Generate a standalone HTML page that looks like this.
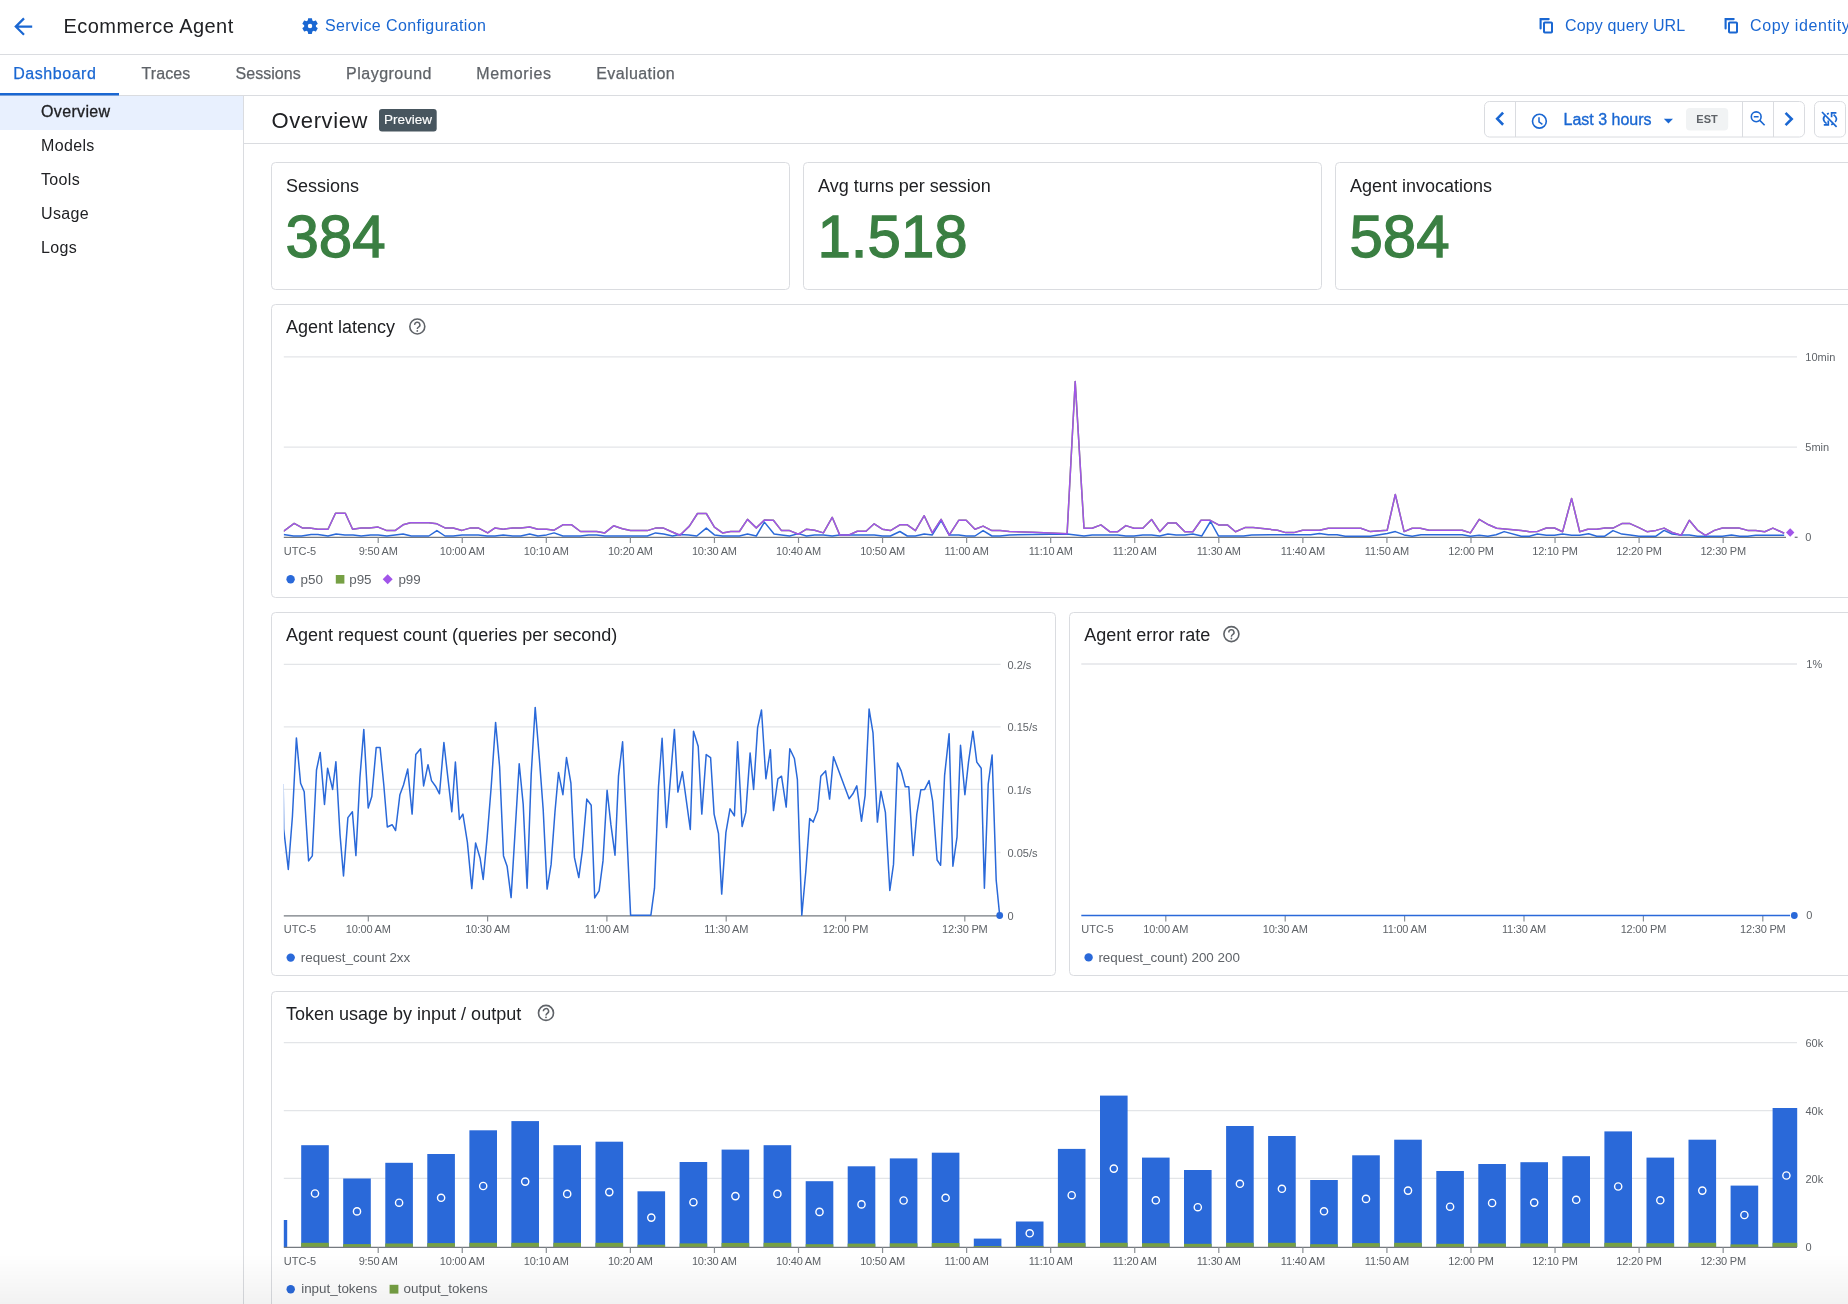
<!DOCTYPE html>
<html><head><meta charset="utf-8"><title>Ecommerce Agent - Overview</title>
<style>
html,body{margin:0;padding:0;background:#fff;}
body{width:1848px;height:1304px;overflow:hidden;position:relative;font-family:"Liberation Sans", sans-serif;}
svg{position:absolute;left:0;top:0;will-change:transform;}
svg text{font-family:"Liberation Sans", sans-serif;}
.fade{position:absolute;left:0;right:0;bottom:0;height:50px;background:linear-gradient(to bottom,rgba(0,0,0,0),rgba(0,0,0,0.05));pointer-events:none;}
</style></head>
<body>
<svg width="1848" height="1304" viewBox="0 0 1848 1304">
<g transform="translate(9.7,13.1) scale(1.125)" fill="#1a67d2"><path d="M7.825 13L13.425 18.6L12 20L4 12L12 4L13.425 5.4L7.825 11H20V13H7.825Z"/></g>
<text x="63.5" y="33" font-size="20" fill="#202124" text-anchor="start" font-weight="400" letter-spacing="0.45">Ecommerce Agent</text>
<g transform="translate(300.2,16.2) scale(0.82)" fill="#1a67d2"><path d="M19.14 12.94c.04-.3.06-.61.06-.94 0-.32-.02-.64-.07-.94l2.03-1.58c.18-.14.23-.41.12-.61l-1.92-3.32c-.12-.22-.37-.29-.59-.22l-2.39.96c-.5-.38-1.03-.7-1.62-.94l-.36-2.54c-.04-.24-.24-.41-.48-.41h-3.840c-.24 0-.43.17-.47.41l-.36 2.54c-.59.24-1.13.57-1.62.94l-2.39-.96c-.22-.08-.47 0-.59.22L2.74 8.87c-.12.21-.08.47.12.61l2.03 1.58c-.05.3-.09.63-.09.94s.02.64.07.94l-2.03 1.58c-.18.14-.23.41-.12.61l1.92 3.32c.12.22.37.29.59.22l2.39-.96c.5.38 1.03.7 1.62.94l.36 2.54c.05.24.24.41.48.41h3.84c.24 0 .44-.17.47-.41l.36-2.54c.59-.24 1.13-.56 1.620-.94l2.39.96c.22.08.47 0 .59-.22l1.92-3.32c.12-.22.07-.47-.12-.61l-2.01-1.58zM12 14.7a2.7 2.7 0 1 1 0-5.4a2.7 2.7 0 1 1 0 5.4z"/></g>
<text x="325" y="31" font-size="16" fill="#1a67d2" text-anchor="start" font-weight="400" letter-spacing="0.4">Service Configuration</text>
<path d="M1540.6,28.4 V19.1 H1548.7" fill="none" stroke="#1a67d2" stroke-width="2.1" stroke-linecap="round"/>
<rect x="1544" y="22.4" width="8" height="10.1" fill="none" stroke="#1a67d2" stroke-width="2" rx="0.8"/>
<text x="1565" y="31" font-size="16" fill="#1a67d2" text-anchor="start" font-weight="400" letter-spacing="0.15">Copy query URL</text>
<path d="M1725.6,28.4 V19.1 H1733.7" fill="none" stroke="#1a67d2" stroke-width="2.1" stroke-linecap="round"/>
<rect x="1729" y="22.4" width="8" height="10.1" fill="none" stroke="#1a67d2" stroke-width="2" rx="0.8"/>
<text x="1750" y="31" font-size="16" fill="#1a67d2" text-anchor="start" font-weight="400" letter-spacing="0.6">Copy identity</text>
<line x1="0" y1="54.5" x2="1848" y2="54.5" stroke="#dadce0" stroke-width="1" />
<text x="13.2" y="79" font-size="16" fill="#1a67d2" text-anchor="start" font-weight="400" stroke="#1a67d2" stroke-width="0.25" letter-spacing="0.55">Dashboard</text>
<text x="141.5" y="79" font-size="16" fill="#5f6368" text-anchor="start" font-weight="400" stroke="#5f6368" stroke-width="0.25" letter-spacing="0.1">Traces</text>
<text x="235.5" y="79" font-size="16" fill="#5f6368" text-anchor="start" font-weight="400" stroke="#5f6368" stroke-width="0.25" letter-spacing="0.05">Sessions</text>
<text x="346" y="79" font-size="16" fill="#5f6368" text-anchor="start" font-weight="400" stroke="#5f6368" stroke-width="0.25" letter-spacing="0.5">Playground</text>
<text x="476.3" y="79" font-size="16" fill="#5f6368" text-anchor="start" font-weight="400" stroke="#5f6368" stroke-width="0.25" letter-spacing="0.65">Memories</text>
<text x="596.3" y="79" font-size="16" fill="#5f6368" text-anchor="start" font-weight="400" stroke="#5f6368" stroke-width="0.25" letter-spacing="0.4">Evaluation</text>
<line x1="0" y1="95.5" x2="1848" y2="95.5" stroke="#dadce0" stroke-width="1" />
<rect x="0" y="93" width="119" height="2.5" fill="#1a67d2" stroke="none" stroke-width="1" rx="0" />
<rect x="0" y="96" width="243" height="34" fill="#e8f0fe" stroke="none" stroke-width="1" rx="0" />
<line x1="243.5" y1="96" x2="243.5" y2="1304" stroke="#dadce0" stroke-width="1" />
<text x="41" y="117" font-size="16" fill="#202124" text-anchor="start" font-weight="400" letter-spacing="0.35" stroke="#202124" stroke-width="0.3">Overview</text>
<text x="41" y="151" font-size="16" fill="#202124" text-anchor="start" font-weight="400" letter-spacing="0.35">Models</text>
<text x="41" y="185" font-size="16" fill="#202124" text-anchor="start" font-weight="400" letter-spacing="0.35">Tools</text>
<text x="41" y="219" font-size="16" fill="#202124" text-anchor="start" font-weight="400" letter-spacing="0.35">Usage</text>
<text x="41" y="253" font-size="16" fill="#202124" text-anchor="start" font-weight="400" letter-spacing="0.35">Logs</text>
<text x="271.5" y="128" font-size="22" fill="#202124" text-anchor="start" font-weight="400" letter-spacing="0.6">Overview</text>
<rect x="379" y="109" width="57.7" height="22.5" fill="#48565f" stroke="none" stroke-width="1" rx="3" />
<text x="384" y="123.8" font-size="13.5" fill="#ffffff" text-anchor="start" font-weight="400" stroke="#ffffff" stroke-width="0.15">Preview</text>
<line x1="244" y1="143.5" x2="1848" y2="143.5" stroke="#dadce0" stroke-width="1" />
<rect x="1484.5" y="101.5" width="320" height="35.5" fill="none" stroke="#dadce0" stroke-width="1" rx="5" />
<line x1="1515.5" y1="101.5" x2="1515.5" y2="137" stroke="#dadce0" stroke-width="1" />
<line x1="1742.5" y1="101.5" x2="1742.5" y2="137" stroke="#dadce0" stroke-width="1" />
<line x1="1773.5" y1="101.5" x2="1773.5" y2="137" stroke="#dadce0" stroke-width="1" />
<path d="M1502.2,113.6 L1497.2,118.7 L1502.2,123.8" fill="none" stroke="#1a67d2" stroke-width="2.6" stroke-linecap="square"/>
<circle cx="1539.4" cy="121.2" r="6.9" fill="none" stroke="#1a67d2" stroke-width="1.6"/>
<path d="M1539,117.3 V121.8 L1542.4,124.3" fill="none" stroke="#1a67d2" stroke-width="1.5"/>
<text x="1563.5" y="124.6" font-size="16" fill="#1a67d2" text-anchor="start" font-weight="400" stroke="#1a67d2" stroke-width="0.35">Last 3 hours</text>
<path d="M1663.8,118.8 L1673,118.8 L1668.4,123.6 Z" fill="#1a67d2"/>
<rect x="1686" y="108" width="42.2" height="22.5" fill="#f1f3f4" stroke="none" stroke-width="1" rx="4" />
<text x="1707" y="122.8" font-size="11" fill="#5f6368" text-anchor="middle" font-weight="700" >EST</text>
<circle cx="1756.2" cy="116.8" r="4.9" fill="none" stroke="#1a67d2" stroke-width="1.6"/>
<path d="M1753.8,116.8 H1758.6 M1759.8,120.4 L1764.6,125.2" fill="none" stroke="#1a67d2" stroke-width="1.6"/>
<path d="M1786.5,113.8 L1791.7,119 L1786.5,124.2" fill="none" stroke="#1a67d2" stroke-width="2.6" stroke-linecap="square"/>
<rect x="1814.5" y="101.5" width="31" height="35.5" fill="none" stroke="#dadce0" stroke-width="1" rx="5" />
<g fill="none" stroke="#1a67d2" stroke-width="1.7" stroke-linecap="butt"><path d="M1822,112 L1836.6,126.8"/><path d="M1824.8,115.4 Q1821.6,120 1826.6,123.6"/><path d="M1823.8,124.9 H1828.3 V120.6"/><path d="M1836.4,112.8 H1831.6 V117.2"/><path d="M1833.6,114.6 Q1838.4,118.4 1835.2,122"/><path d="M1827,114.2 L1828.8,113.2"/><path d="M1831.2,124.8 L1833,123.8"/></g>
<rect x="271.5" y="162.5" width="518" height="127" fill="#fff" stroke="#dadce0" stroke-width="1" rx="4" />
<rect x="803.5" y="162.5" width="518" height="127" fill="#fff" stroke="#dadce0" stroke-width="1" rx="4" />
<rect x="1335.5" y="162.5" width="518" height="127" fill="#fff" stroke="#dadce0" stroke-width="1" rx="4" />
<text x="286" y="191.6" font-size="18" fill="#202124" text-anchor="start" font-weight="400" >Sessions</text>
<text x="818" y="191.6" font-size="18" fill="#202124" text-anchor="start" font-weight="400" >Avg turns per session</text>
<text x="1350" y="191.6" font-size="18" fill="#202124" text-anchor="start" font-weight="400" >Agent invocations</text>
<text x="285.5" y="257.4" font-size="60" fill="#3a7f42" text-anchor="start" font-weight="400" stroke="#3a7f42" stroke-width="1.3">384</text>
<text x="817.5" y="257.4" font-size="60" fill="#3a7f42" text-anchor="start" font-weight="400" stroke="#3a7f42" stroke-width="1.3">1.518</text>
<text x="1349.5" y="257.4" font-size="60" fill="#3a7f42" text-anchor="start" font-weight="400" stroke="#3a7f42" stroke-width="1.3">584</text>
<rect x="271.5" y="304.5" width="1600" height="293" fill="#fff" stroke="#dadce0" stroke-width="1" rx="4" />
<text x="286" y="333.4" font-size="18" fill="#202124" text-anchor="start" font-weight="400" >Agent latency</text>
<circle cx="417.3" cy="326.5" r="7.5" fill="none" stroke="#5f6368" stroke-width="1.6"/>
<path d="M414.7,324.9 A2.6,2.6 0 1 1 418.5,327.1 C417.5,327.7 417.3,328.1 417.3,329.1" fill="none" stroke="#5f6368" stroke-width="1.5"/>
<circle cx="417.3" cy="330.9" r="0.9" fill="#5f6368"/>
<line x1="283.8" y1="356.8" x2="1797" y2="356.8" stroke="#e3e5e8" stroke-width="1.3" />
<line x1="283.8" y1="447.2" x2="1797" y2="447.2" stroke="#e3e5e8" stroke-width="1.3" />
<text x="1805.3" y="361.0" font-size="11" fill="#5f6368" text-anchor="start" font-weight="400" >10min</text>
<text x="1805.3" y="451.4" font-size="11" fill="#5f6368" text-anchor="start" font-weight="400" >5min</text>
<text x="1805.3" y="541.2" font-size="11" fill="#5f6368" text-anchor="start" font-weight="400" >0</text>
<line x1="283.8" y1="537.3" x2="1786" y2="537.3" stroke="#757a80" stroke-width="1.3" />
<line x1="1794.7" y1="537.3" x2="1797.6" y2="537.3" stroke="#757a80" stroke-width="1.3" />
<line x1="378.2" y1="537.3" x2="378.2" y2="543" stroke="#8a8f94" stroke-width="1.2" />
<text x="378.2" y="555" font-size="11" fill="#5f6368" text-anchor="middle" font-weight="400" letter-spacing="-0.2">9:50 AM</text>
<line x1="462.26" y1="537.3" x2="462.26" y2="543" stroke="#8a8f94" stroke-width="1.2" />
<text x="462.3" y="555" font-size="11" fill="#5f6368" text-anchor="middle" font-weight="400" letter-spacing="-0.2">10:00 AM</text>
<line x1="546.3199999999999" y1="537.3" x2="546.3199999999999" y2="543" stroke="#8a8f94" stroke-width="1.2" />
<text x="546.3" y="555" font-size="11" fill="#5f6368" text-anchor="middle" font-weight="400" letter-spacing="-0.2">10:10 AM</text>
<line x1="630.38" y1="537.3" x2="630.38" y2="543" stroke="#8a8f94" stroke-width="1.2" />
<text x="630.4" y="555" font-size="11" fill="#5f6368" text-anchor="middle" font-weight="400" letter-spacing="-0.2">10:20 AM</text>
<line x1="714.44" y1="537.3" x2="714.44" y2="543" stroke="#8a8f94" stroke-width="1.2" />
<text x="714.4" y="555" font-size="11" fill="#5f6368" text-anchor="middle" font-weight="400" letter-spacing="-0.2">10:30 AM</text>
<line x1="798.5" y1="537.3" x2="798.5" y2="543" stroke="#8a8f94" stroke-width="1.2" />
<text x="798.5" y="555" font-size="11" fill="#5f6368" text-anchor="middle" font-weight="400" letter-spacing="-0.2">10:40 AM</text>
<line x1="882.56" y1="537.3" x2="882.56" y2="543" stroke="#8a8f94" stroke-width="1.2" />
<text x="882.6" y="555" font-size="11" fill="#5f6368" text-anchor="middle" font-weight="400" letter-spacing="-0.2">10:50 AM</text>
<line x1="966.6200000000001" y1="537.3" x2="966.6200000000001" y2="543" stroke="#8a8f94" stroke-width="1.2" />
<text x="966.6" y="555" font-size="11" fill="#5f6368" text-anchor="middle" font-weight="400" letter-spacing="-0.2">11:00 AM</text>
<line x1="1050.68" y1="537.3" x2="1050.68" y2="543" stroke="#8a8f94" stroke-width="1.2" />
<text x="1050.7" y="555" font-size="11" fill="#5f6368" text-anchor="middle" font-weight="400" letter-spacing="-0.2">11:10 AM</text>
<line x1="1134.74" y1="537.3" x2="1134.74" y2="543" stroke="#8a8f94" stroke-width="1.2" />
<text x="1134.7" y="555" font-size="11" fill="#5f6368" text-anchor="middle" font-weight="400" letter-spacing="-0.2">11:20 AM</text>
<line x1="1218.8" y1="537.3" x2="1218.8" y2="543" stroke="#8a8f94" stroke-width="1.2" />
<text x="1218.8" y="555" font-size="11" fill="#5f6368" text-anchor="middle" font-weight="400" letter-spacing="-0.2">11:30 AM</text>
<line x1="1302.8600000000001" y1="537.3" x2="1302.8600000000001" y2="543" stroke="#8a8f94" stroke-width="1.2" />
<text x="1302.9" y="555" font-size="11" fill="#5f6368" text-anchor="middle" font-weight="400" letter-spacing="-0.2">11:40 AM</text>
<line x1="1386.92" y1="537.3" x2="1386.92" y2="543" stroke="#8a8f94" stroke-width="1.2" />
<text x="1386.9" y="555" font-size="11" fill="#5f6368" text-anchor="middle" font-weight="400" letter-spacing="-0.2">11:50 AM</text>
<line x1="1470.98" y1="537.3" x2="1470.98" y2="543" stroke="#8a8f94" stroke-width="1.2" />
<text x="1471.0" y="555" font-size="11" fill="#5f6368" text-anchor="middle" font-weight="400" letter-spacing="-0.2">12:00 PM</text>
<line x1="1555.0400000000002" y1="537.3" x2="1555.0400000000002" y2="543" stroke="#8a8f94" stroke-width="1.2" />
<text x="1555.0" y="555" font-size="11" fill="#5f6368" text-anchor="middle" font-weight="400" letter-spacing="-0.2">12:10 PM</text>
<line x1="1639.1000000000001" y1="537.3" x2="1639.1000000000001" y2="543" stroke="#8a8f94" stroke-width="1.2" />
<text x="1639.1" y="555" font-size="11" fill="#5f6368" text-anchor="middle" font-weight="400" letter-spacing="-0.2">12:20 PM</text>
<line x1="1723.16" y1="537.3" x2="1723.16" y2="543" stroke="#8a8f94" stroke-width="1.2" />
<text x="1723.2" y="555" font-size="11" fill="#5f6368" text-anchor="middle" font-weight="400" letter-spacing="-0.2">12:30 PM</text>
<text x="283.8" y="555" font-size="11" fill="#5f6368" text-anchor="start" font-weight="400" >UTC-5</text>
<clipPath id="latclip"><rect x="283.8" y="340" width="1513.2" height="198"/></clipPath>
<g clip-path="url(#latclip)">
<polyline points="283.4,531.5 294.2,523.4 302.3,527.9 309.8,528.1 317.9,529.2 328.0,529.2 335.5,513.3 345.3,513.3 352.6,529.2 361.2,528.1 369.3,528.1 378.1,527.1 386.9,530.6 395.0,530.6 403.1,524.8 410.5,522.7 428.8,522.7 436.9,523.8 445.0,527.9 453.2,528.1 462.0,530.4 470.7,527.9 478.2,527.9 487.7,532.9 495.1,527.9 503.2,529.2 512.7,527.9 520.8,527.9 529.7,527.1 537.9,529.2 546.6,529.2 554.1,530.2 562.9,524.8 571.7,524.8 580.5,531.5 596.7,531.5 604.8,532.9 613.6,525.8 622.4,528.8 630.5,530.6 647.4,530.6 656.2,527.9 663.0,527.9 671.1,531.5 679.9,535.2 689.4,526.1 697.5,513.5 706.3,513.5 714.4,527.1 722.5,532.9 730.6,531.5 739.4,531.5 747.5,519.4 756.3,527.9 764.4,520.0 773.4,520.3 781.5,530.6 789.6,530.6 798.4,534.2 806.5,529.2 814.6,530.2 823.4,532.9 832.2,517.3 839.7,534.9 849.1,534.9 857.3,531.3 866.0,531.3 874.2,523.8 882.3,529.2 890.4,530.6 899.9,524.8 907.3,524.8 915.4,530.6 924.2,515.7 932.3,532.9 941.1,519.4 949.2,535.2 958.7,520.3 966.2,520.3 975.0,529.2 983.1,526.1 991.9,530.6 1000.0,530.6 1009.4,531.5 1032.6,532.3 1067.1,533.7 1075.2,381.5 1084.0,528.3 1092.1,528.3 1100.9,524.9 1109.7,531.7 1117.8,531.7 1125.9,525.6 1134.0,528.3 1142.8,528.3 1151.6,519.5 1159.8,531.7 1167.9,522.9 1176.0,522.9 1184.8,531.7 1192.9,531.7 1201.0,520.2 1209.8,520.2 1218.6,524.9 1227.4,524.9 1235.5,531.7 1245.0,527.6 1253.1,527.6 1277.6,530.2 1285.7,532.6 1293.8,532.6 1302.6,530.2 1319.5,530.2 1328.3,528.2 1360.8,528.2 1370.3,531.6 1387.2,530.2 1395.3,494.4 1404.1,531.6 1412.2,528.2 1420.3,528.2 1429.1,530.2 1462.2,530.2 1470.4,532.9 1479.2,519.4 1488.6,524.8 1496.7,528.2 1521.2,530.4 1529.4,531.7 1537.5,531.4 1546.4,528.0 1554.5,528.0 1562.6,531.7 1571.6,498.4 1579.7,531.7 1587.8,529.3 1596.7,529.3 1604.8,528.1 1613.0,528.1 1621.9,523.6 1630.0,523.6 1638.9,527.6 1647.0,531.7 1656.0,530.4 1664.1,528.1 1672.2,532.5 1681.1,535.3 1689.3,520.3 1697.4,530.1 1705.5,535.3 1714.4,530.4 1722.5,528.0 1738.8,528.0 1747.7,530.4 1755.8,530.4 1764.7,531.7 1772.9,528.1 1784.2,533.3" fill="none" stroke="#76a044" stroke-width="1.5" stroke-linejoin="round" />
<polyline points="283.4,534.6 293.5,536.0 301.6,536.0 311.1,534.6 317.9,534.6 328.0,536.0 336.1,534.0 344.9,534.9 353.1,534.9 361.2,536.0 370.6,534.9 378.1,534.9 386.9,536.0 395.0,534.9 403.1,534.0 411.2,536.0 428.8,536.0 436.9,530.6 445.0,536.0 453.2,536.0 462.0,534.9 478.2,534.9 487.0,536.0 495.1,536.0 503.2,534.9 512.7,536.0 520.8,536.0 529.7,534.0 537.9,536.0 546.6,534.9 554.1,532.9 562.9,536.0 580.5,536.0 588.6,534.9 596.7,534.9 604.8,536.0 647.4,536.0 655.5,532.9 663.7,534.0 672.5,536.0 679.9,534.6 688.7,534.9 696.8,536.0 706.3,528.1 714.4,534.9 722.5,536.0 739.4,536.0 747.5,534.0 756.3,536.0 764.4,522.1 774.1,534.0 781.5,534.9 789.6,536.0 798.4,533.6 806.5,536.0 814.6,534.9 823.4,534.9 832.2,536.0 839.7,534.9 874.2,534.9 882.3,536.0 890.4,536.0 899.9,531.5 907.3,536.0 915.4,536.0 924.2,534.0 932.3,534.9 941.1,520.7 949.2,534.9 958.7,534.9 966.2,536.0 975.0,536.0 983.1,530.6 991.9,536.0 1000.0,536.0 1009.4,534.9 1067.1,534.1 1084.0,536.1 1092.1,535.0 1117.8,535.0 1125.9,536.1 1134.0,536.1 1142.8,535.0 1151.6,535.0 1159.8,536.1 1167.9,534.1 1176.0,535.0 1184.8,535.0 1192.9,534.1 1201.7,536.1 1210.5,521.5 1218.6,536.1 1243.6,536.1 1251.7,535.0 1269.5,534.7 1310.7,534.7 1319.5,533.6 1328.3,534.7 1337.1,534.7 1345.2,536.3 1370.3,536.3 1387.2,533.6 1395.3,531.6 1404.1,534.9 1412.2,536.3 1421.0,534.7 1462.2,534.7 1470.4,536.3 1479.2,535.2 1487.9,536.3 1496.1,534.7 1504.2,531.6 1521.2,536.2 1529.4,536.2 1537.5,534.1 1546.4,535.3 1554.5,535.3 1562.6,534.1 1571.6,535.3 1579.7,535.3 1588.6,533.8 1596.7,536.2 1604.8,536.2 1613.0,530.6 1621.9,534.1 1630.0,534.9 1638.9,536.2 1656.0,536.2 1664.1,530.4 1672.2,534.1 1681.1,534.9 1689.3,534.9 1697.4,536.2 1722.5,536.2 1731.5,534.9 1739.6,536.2 1747.7,536.2 1755.8,535.3 1784.2,535.3" fill="none" stroke="#2a69d9" stroke-width="1.5" stroke-linejoin="round" />
<polyline points="283.4,531.5 294.2,523.4 302.3,527.9 309.8,528.1 317.9,529.2 328.0,529.2 335.5,513.3 345.3,513.3 352.6,529.2 361.2,528.1 369.3,528.1 378.1,527.1 386.9,530.6 395.0,530.6 403.1,524.8 410.5,522.7 428.8,522.7 436.9,523.8 445.0,527.9 453.2,528.1 462.0,530.4 470.7,527.9 478.2,527.9 487.7,532.9 495.1,527.9 503.2,529.2 512.7,527.9 520.8,527.9 529.7,527.1 537.9,529.2 546.6,529.2 554.1,530.2 562.9,524.8 571.7,524.8 580.5,531.5 596.7,531.5 604.8,532.9 613.6,525.8 622.4,528.8 630.5,530.6 647.4,530.6 656.2,527.9 663.0,527.9 671.1,531.5 679.9,535.2 689.4,526.1 697.5,513.5 706.3,513.5 714.4,527.1 722.5,532.9 730.6,531.5 739.4,531.5 747.5,519.4 756.3,527.9 764.4,520.0 773.4,520.3 781.5,530.6 789.6,530.6 798.4,534.2 806.5,529.2 814.6,530.2 823.4,532.9 832.2,517.3 839.7,534.9 849.1,534.9 857.3,531.3 866.0,531.3 874.2,523.8 882.3,529.2 890.4,530.6 899.9,524.8 907.3,524.8 915.4,530.6 924.2,515.7 932.3,532.9 941.1,519.4 949.2,535.2 958.7,520.3 966.2,520.3 975.0,529.2 983.1,526.1 991.9,530.6 1000.0,530.6 1009.4,531.5 1032.6,532.3 1067.1,533.7 1075.2,381.5 1084.0,528.3 1092.1,528.3 1100.9,524.9 1109.7,531.7 1117.8,531.7 1125.9,525.6 1134.0,528.3 1142.8,528.3 1151.6,519.5 1159.8,531.7 1167.9,522.9 1176.0,522.9 1184.8,531.7 1192.9,531.7 1201.0,520.2 1209.8,520.2 1218.6,524.9 1227.4,524.9 1235.5,531.7 1245.0,527.6 1253.1,527.6 1277.6,530.2 1285.7,532.6 1293.8,532.6 1302.6,530.2 1319.5,530.2 1328.3,528.2 1360.8,528.2 1370.3,531.6 1387.2,530.2 1395.3,494.4 1404.1,531.6 1412.2,528.2 1420.3,528.2 1429.1,530.2 1462.2,530.2 1470.4,532.9 1479.2,519.4 1488.6,524.8 1496.7,528.2 1521.2,530.4 1529.4,531.7 1537.5,531.4 1546.4,528.0 1554.5,528.0 1562.6,531.7 1571.6,498.4 1579.7,531.7 1587.8,529.3 1596.7,529.3 1604.8,528.1 1613.0,528.1 1621.9,523.6 1630.0,523.6 1638.9,527.6 1647.0,531.7 1656.0,530.4 1664.1,528.1 1672.2,532.5 1681.1,535.3 1689.3,520.3 1697.4,530.1 1705.5,535.3 1714.4,530.4 1722.5,528.0 1738.8,528.0 1747.7,530.4 1755.8,530.4 1764.7,531.7 1772.9,528.1 1784.2,533.3" fill="none" stroke="#a155e9" stroke-width="1.5" stroke-linejoin="round" />
</g>
<path d="M1790.2,528.2 L1794.4,532.5 L1790.2,536.8 L1786,532.5 Z" fill="#a155e9"/>
<circle cx="290.6" cy="579.2" r="4.2" fill="#2a69d9"/>
<text x="300.5" y="583.5" font-size="13.4" fill="#5f6368" text-anchor="start" font-weight="400" >p50</text>
<rect x="335.8" y="575" width="8.6" height="8.6" fill="#76a044" stroke="none" stroke-width="1" rx="0" />
<text x="349.2" y="583.5" font-size="13.4" fill="#5f6368" text-anchor="start" font-weight="400" >p95</text>
<path d="M387.7,574.2 L392.7,579.2 L387.7,584.2 L382.7,579.2 Z" fill="#a155e9"/>
<text x="398.4" y="583.5" font-size="13.4" fill="#5f6368" text-anchor="start" font-weight="400" >p99</text>
<rect x="271.5" y="612.5" width="784" height="363" fill="#fff" stroke="#dadce0" stroke-width="1" rx="4" />
<text x="286" y="640.8" font-size="18" fill="#202124" text-anchor="start" font-weight="400" >Agent request count (queries per second)</text>
<line x1="283.8" y1="664.4" x2="1000.6" y2="664.4" stroke="#e3e5e8" stroke-width="1.3" />
<line x1="283.8" y1="726.9" x2="1000.6" y2="726.9" stroke="#e3e5e8" stroke-width="1.3" />
<line x1="283.8" y1="789.4" x2="1000.6" y2="789.4" stroke="#e3e5e8" stroke-width="1.3" />
<line x1="283.8" y1="852.5" x2="1000.6" y2="852.5" stroke="#e3e5e8" stroke-width="1.3" />
<text x="1007.5" y="668.6" font-size="11" fill="#5f6368" text-anchor="start" font-weight="400" >0.2/s</text>
<text x="1007.5" y="731.1" font-size="11" fill="#5f6368" text-anchor="start" font-weight="400" >0.15/s</text>
<text x="1007.5" y="793.6" font-size="11" fill="#5f6368" text-anchor="start" font-weight="400" >0.1/s</text>
<text x="1007.5" y="856.7" font-size="11" fill="#5f6368" text-anchor="start" font-weight="400" >0.05/s</text>
<text x="1007.5" y="919.7" font-size="11" fill="#5f6368" text-anchor="start" font-weight="400" >0</text>
<line x1="283.8" y1="915.8" x2="1000.6" y2="915.8" stroke="#757a80" stroke-width="1.3" />
<line x1="368.3" y1="915.8" x2="368.3" y2="921.5" stroke="#8a8f94" stroke-width="1.2" />
<text x="368.3" y="933" font-size="11" fill="#5f6368" text-anchor="middle" font-weight="400" letter-spacing="-0.2">10:00 AM</text>
<line x1="487.6" y1="915.8" x2="487.6" y2="921.5" stroke="#8a8f94" stroke-width="1.2" />
<text x="487.6" y="933" font-size="11" fill="#5f6368" text-anchor="middle" font-weight="400" letter-spacing="-0.2">10:30 AM</text>
<line x1="606.9" y1="915.8" x2="606.9" y2="921.5" stroke="#8a8f94" stroke-width="1.2" />
<text x="606.9" y="933" font-size="11" fill="#5f6368" text-anchor="middle" font-weight="400" letter-spacing="-0.2">11:00 AM</text>
<line x1="726.2" y1="915.8" x2="726.2" y2="921.5" stroke="#8a8f94" stroke-width="1.2" />
<text x="726.2" y="933" font-size="11" fill="#5f6368" text-anchor="middle" font-weight="400" letter-spacing="-0.2">11:30 AM</text>
<line x1="845.5" y1="915.8" x2="845.5" y2="921.5" stroke="#8a8f94" stroke-width="1.2" />
<text x="845.5" y="933" font-size="11" fill="#5f6368" text-anchor="middle" font-weight="400" letter-spacing="-0.2">12:00 PM</text>
<line x1="964.8" y1="915.8" x2="964.8" y2="921.5" stroke="#8a8f94" stroke-width="1.2" />
<text x="964.8" y="933" font-size="11" fill="#5f6368" text-anchor="middle" font-weight="400" letter-spacing="-0.2">12:30 PM</text>
<text x="283.8" y="933" font-size="11" fill="#5f6368" text-anchor="start" font-weight="400" >UTC-5</text>
<clipPath id="reqclip"><rect x="283.8" y="640" width="718.8" height="277"/></clipPath>
<g clip-path="url(#reqclip)">
<polyline points="283.2,784.1 283.7,829.0 288.3,869.4 292.4,816.8 296.4,737.9 300.6,783.2 304.2,791.7 308.6,860.9 312.3,855.9 316.5,770.0 320.2,752.4 324.5,804.4 327.6,768.2 332.6,789.4 335.9,761.7 340.0,834.4 343.5,875.9 347.9,817.6 352.4,811.8 355.9,855.6 359.9,777.9 363.8,729.4 368.2,807.9 371.8,796.5 376.2,747.6 380.1,747.6 383.8,785.0 387.3,827.0 392.1,824.7 395.6,830.5 399.9,794.7 403.5,785.0 407.7,769.1 412.1,814.1 415.8,754.6 420.6,748.8 423.6,785.9 428.0,764.7 431.5,780.6 435.9,786.8 439.5,793.8 443.9,742.6 447.9,777.9 451.8,811.8 455.4,762.1 459.4,819.4 462.9,814.1 467.4,842.4 471.8,888.6 475.6,842.9 480.1,858.2 483.2,879.4 487.1,837.9 491.2,786.8 495.6,722.4 499.6,766.5 503.5,855.9 507.1,866.2 511.1,897.6 519.2,763.8 523.2,804.4 527.1,888.2 531.2,774.4 535.2,707.4 539.5,760.3 543.2,809.7 547.1,889.1 551.1,864.4 555.0,811.5 558.5,772.6 562.9,794.7 566.5,757.6 570.9,783.2 574.4,857.4 578.8,877.6 582.4,850.3 586.8,799.1 591.2,805.3 594.7,897.9 599.1,890.9 603.0,860.9 607.1,790.3 610.9,824.7 615.0,855.2 618.5,776.2 622.6,741.8 630.6,915.2 650.9,915.2 654.5,888.2 658.5,786.8 662.1,738.2 666.5,827.4 674.4,729.4 677.9,792.1 682.4,771.8 690.3,829.5 693.5,731.2 698.2,746.2 701.8,814.1 706.2,754.6 710.6,757.6 714.1,814.1 718.5,833.5 721.7,894.1 725.9,832.6 730.0,808.8 734.4,815.9 737.6,741.8 742.1,826.5 745.8,812.4 750.1,752.9 753.6,789.4 757.6,727.6 761.5,710.0 765.9,778.8 770.4,749.7 773.5,810.6 777.9,778.8 781.5,776.2 786.2,807.1 789.8,748.8 794.4,758.5 797.4,779.7 801.8,915.2 805.8,871.5 809.7,818.5 813.2,822.1 817.6,810.6 820.8,776.2 825.6,770.9 829.6,799.1 833.5,756.8 849.1,798.8 852.9,793.8 856.8,785.9 861.5,821.2 865.1,795.6 869.1,709.1 873.0,732.9 877.4,822.1 880.9,791.2 885.4,812.4 889.8,890.5 893.5,864.4 897.4,762.9 901.2,770.9 905.3,786.8 908.8,786.8 913.2,855.6 916.8,814.1 920.8,789.8 924.7,789.4 929.1,780.6 932.6,800.9 937.1,860.0 940.6,865.3 944.6,775.3 949.1,733.8 952.9,866.2 957.0,837.1 960.5,745.3 964.9,794.7 968.5,762.1 972.9,731.2 976.8,762.1 981.2,768.2 984.4,888.2 988.2,784.1 992.1,755.0 996.2,880.3 999.7,915.6" fill="none" stroke="#2a69d9" stroke-width="1.5" stroke-linejoin="round" />
</g>
<circle cx="999.7" cy="915.5" r="3.4" fill="#2a69d9"/>
<circle cx="290.7" cy="957.6" r="4.2" fill="#2a69d9"/>
<text x="300.8" y="962" font-size="13.4" fill="#5f6368" text-anchor="start" font-weight="400" >request_count 2xx</text>
<rect x="1069.5" y="612.5" width="800" height="363" fill="#fff" stroke="#dadce0" stroke-width="1" rx="4" />
<text x="1084.3" y="640.8" font-size="18" fill="#202124" text-anchor="start" font-weight="400" >Agent error rate</text>
<circle cx="1231.4" cy="634.1" r="7.5" fill="none" stroke="#5f6368" stroke-width="1.6"/>
<path d="M1228.8000000000002,632.5 A2.6,2.6 0 1 1 1232.6000000000001,634.7 C1231.6000000000001,635.3000000000001 1231.4,635.7 1231.4,636.7" fill="none" stroke="#5f6368" stroke-width="1.5"/>
<circle cx="1231.4" cy="638.5" r="0.9" fill="#5f6368"/>
<line x1="1081.3" y1="664" x2="1797" y2="664" stroke="#e3e5e8" stroke-width="1.3" />
<text x="1806.3" y="668.2" font-size="11" fill="#5f6368" text-anchor="start" font-weight="400" >1%</text>
<text x="1806.3" y="918.9" font-size="11" fill="#5f6368" text-anchor="start" font-weight="400" >0</text>
<line x1="1165.8" y1="915.8" x2="1165.8" y2="921.5" stroke="#8a8f94" stroke-width="1.2" />
<text x="1165.8" y="933" font-size="11" fill="#5f6368" text-anchor="middle" font-weight="400" letter-spacing="-0.2">10:00 AM</text>
<line x1="1285.2" y1="915.8" x2="1285.2" y2="921.5" stroke="#8a8f94" stroke-width="1.2" />
<text x="1285.2" y="933" font-size="11" fill="#5f6368" text-anchor="middle" font-weight="400" letter-spacing="-0.2">10:30 AM</text>
<line x1="1404.6" y1="915.8" x2="1404.6" y2="921.5" stroke="#8a8f94" stroke-width="1.2" />
<text x="1404.6" y="933" font-size="11" fill="#5f6368" text-anchor="middle" font-weight="400" letter-spacing="-0.2">11:00 AM</text>
<line x1="1524.0" y1="915.8" x2="1524.0" y2="921.5" stroke="#8a8f94" stroke-width="1.2" />
<text x="1524.0" y="933" font-size="11" fill="#5f6368" text-anchor="middle" font-weight="400" letter-spacing="-0.2">11:30 AM</text>
<line x1="1643.4" y1="915.8" x2="1643.4" y2="921.5" stroke="#8a8f94" stroke-width="1.2" />
<text x="1643.4" y="933" font-size="11" fill="#5f6368" text-anchor="middle" font-weight="400" letter-spacing="-0.2">12:00 PM</text>
<line x1="1762.8" y1="915.8" x2="1762.8" y2="921.5" stroke="#8a8f94" stroke-width="1.2" />
<text x="1762.8" y="933" font-size="11" fill="#5f6368" text-anchor="middle" font-weight="400" letter-spacing="-0.2">12:30 PM</text>
<text x="1081.3" y="933" font-size="11" fill="#5f6368" text-anchor="start" font-weight="400" >UTC-5</text>
<line x1="1081.3" y1="915.5" x2="1790" y2="915.5" stroke="#2a69d9" stroke-width="1.6" />
<circle cx="1794.3" cy="915.5" r="3.4" fill="#2a69d9"/>
<circle cx="1088.6" cy="957.4" r="4.2" fill="#2a69d9"/>
<text x="1098.4" y="962" font-size="13.4" fill="#5f6368" text-anchor="start" font-weight="400" >request_count) 200 200</text>
<rect x="271.5" y="991.5" width="1600" height="400" fill="#fff" stroke="#dadce0" stroke-width="1" rx="4" />
<text x="286" y="1019.5" font-size="18" fill="#202124" text-anchor="start" font-weight="400" >Token usage by input / output</text>
<circle cx="546" cy="1012.9" r="7.5" fill="none" stroke="#5f6368" stroke-width="1.6"/>
<path d="M543.4,1011.3 A2.6,2.6 0 1 1 547.2,1013.5 C546.2,1014.1 546,1014.5 546,1015.5" fill="none" stroke="#5f6368" stroke-width="1.5"/>
<circle cx="546" cy="1017.3" r="0.9" fill="#5f6368"/>
<line x1="283.8" y1="1042.7" x2="1797" y2="1042.7" stroke="#e3e5e8" stroke-width="1.3" />
<line x1="283.8" y1="1110.6" x2="1797" y2="1110.6" stroke="#e3e5e8" stroke-width="1.3" />
<line x1="283.8" y1="1178.3" x2="1797" y2="1178.3" stroke="#e3e5e8" stroke-width="1.3" />
<text x="1805.4" y="1046.9" font-size="11" fill="#5f6368" text-anchor="start" font-weight="400" >60k</text>
<text x="1805.4" y="1114.8" font-size="11" fill="#5f6368" text-anchor="start" font-weight="400" >40k</text>
<text x="1805.4" y="1182.5" font-size="11" fill="#5f6368" text-anchor="start" font-weight="400" >20k</text>
<text x="1805.4" y="1251.2" font-size="11" fill="#5f6368" text-anchor="start" font-weight="400" >0</text>
<rect x="283.8" y="1220" width="3.4" height="27" fill="#2a69d9" stroke="none" stroke-width="1" rx="0" />
<rect x="301.2" y="1145.2" width="27.6" height="101.8" fill="#2a69d9" stroke="none" stroke-width="1" rx="0" />
<rect x="301.2" y="1242.8" width="27.6" height="4.2" fill="#76a044" stroke="none" stroke-width="1" rx="0" />
<circle cx="315.0" cy="1193.5" r="3.6" fill="none" stroke="#ffffff" stroke-width="1.4"/>
<rect x="343.2" y="1178.5" width="27.6" height="68.5" fill="#2a69d9" stroke="none" stroke-width="1" rx="0" />
<rect x="343.2" y="1244.1" width="27.6" height="2.9" fill="#76a044" stroke="none" stroke-width="1" rx="0" />
<circle cx="357.0" cy="1211.4" r="3.6" fill="none" stroke="#ffffff" stroke-width="1.4"/>
<rect x="385.3" y="1162.8" width="27.6" height="84.2" fill="#2a69d9" stroke="none" stroke-width="1" rx="0" />
<rect x="385.3" y="1243.5" width="27.6" height="3.5" fill="#76a044" stroke="none" stroke-width="1" rx="0" />
<circle cx="399.1" cy="1202.7" r="3.6" fill="none" stroke="#ffffff" stroke-width="1.4"/>
<rect x="427.3" y="1154" width="27.6" height="93" fill="#2a69d9" stroke="none" stroke-width="1" rx="0" />
<rect x="427.3" y="1243.1" width="27.6" height="3.9" fill="#76a044" stroke="none" stroke-width="1" rx="0" />
<circle cx="441.1" cy="1197.8" r="3.6" fill="none" stroke="#ffffff" stroke-width="1.4"/>
<rect x="469.4" y="1130.3" width="27.6" height="116.7" fill="#2a69d9" stroke="none" stroke-width="1" rx="0" />
<rect x="469.4" y="1242.8" width="27.6" height="4.2" fill="#76a044" stroke="none" stroke-width="1" rx="0" />
<circle cx="483.2" cy="1186" r="3.6" fill="none" stroke="#ffffff" stroke-width="1.4"/>
<rect x="511.4" y="1121.1" width="27.6" height="125.9" fill="#2a69d9" stroke="none" stroke-width="1" rx="0" />
<rect x="511.4" y="1242.8" width="27.6" height="4.2" fill="#76a044" stroke="none" stroke-width="1" rx="0" />
<circle cx="525.2" cy="1181.6" r="3.6" fill="none" stroke="#ffffff" stroke-width="1.4"/>
<rect x="553.4" y="1145.2" width="27.6" height="101.8" fill="#2a69d9" stroke="none" stroke-width="1" rx="0" />
<rect x="553.4" y="1242.8" width="27.6" height="4.2" fill="#76a044" stroke="none" stroke-width="1" rx="0" />
<circle cx="567.2" cy="1193.9" r="3.6" fill="none" stroke="#ffffff" stroke-width="1.4"/>
<rect x="595.5" y="1141.7" width="27.6" height="105.3" fill="#2a69d9" stroke="none" stroke-width="1" rx="0" />
<rect x="595.5" y="1242.8" width="27.6" height="4.2" fill="#76a044" stroke="none" stroke-width="1" rx="0" />
<circle cx="609.3" cy="1192.1" r="3.6" fill="none" stroke="#ffffff" stroke-width="1.4"/>
<rect x="637.5" y="1191.3" width="27.6" height="55.7" fill="#2a69d9" stroke="none" stroke-width="1" rx="0" />
<rect x="637.5" y="1244.7" width="27.6" height="2.3" fill="#76a044" stroke="none" stroke-width="1" rx="0" />
<circle cx="651.3" cy="1217.6" r="3.6" fill="none" stroke="#ffffff" stroke-width="1.4"/>
<rect x="679.6" y="1162" width="27.6" height="85" fill="#2a69d9" stroke="none" stroke-width="1" rx="0" />
<rect x="679.6" y="1243.4" width="27.6" height="3.6" fill="#76a044" stroke="none" stroke-width="1" rx="0" />
<circle cx="693.4" cy="1202.2" r="3.6" fill="none" stroke="#ffffff" stroke-width="1.4"/>
<rect x="721.6" y="1149.6" width="27.6" height="97.4" fill="#2a69d9" stroke="none" stroke-width="1" rx="0" />
<rect x="721.6" y="1242.9" width="27.6" height="4.1" fill="#76a044" stroke="none" stroke-width="1" rx="0" />
<circle cx="735.4" cy="1196.1" r="3.6" fill="none" stroke="#ffffff" stroke-width="1.4"/>
<rect x="763.6" y="1145.2" width="27.6" height="101.8" fill="#2a69d9" stroke="none" stroke-width="1" rx="0" />
<rect x="763.6" y="1242.8" width="27.6" height="4.2" fill="#76a044" stroke="none" stroke-width="1" rx="0" />
<circle cx="777.4" cy="1193.9" r="3.6" fill="none" stroke="#ffffff" stroke-width="1.4"/>
<rect x="805.7" y="1181.2" width="27.6" height="65.8" fill="#2a69d9" stroke="none" stroke-width="1" rx="0" />
<rect x="805.7" y="1244.2" width="27.6" height="2.8" fill="#76a044" stroke="none" stroke-width="1" rx="0" />
<circle cx="819.5" cy="1211.9" r="3.6" fill="none" stroke="#ffffff" stroke-width="1.4"/>
<rect x="847.7" y="1166.3" width="27.6" height="80.7" fill="#2a69d9" stroke="none" stroke-width="1" rx="0" />
<rect x="847.7" y="1243.6" width="27.6" height="3.4" fill="#76a044" stroke="none" stroke-width="1" rx="0" />
<circle cx="861.5" cy="1204.4" r="3.6" fill="none" stroke="#ffffff" stroke-width="1.4"/>
<rect x="889.8" y="1158.4" width="27.6" height="88.6" fill="#2a69d9" stroke="none" stroke-width="1" rx="0" />
<rect x="889.8" y="1243.3" width="27.6" height="3.7" fill="#76a044" stroke="none" stroke-width="1" rx="0" />
<circle cx="903.6" cy="1200.5" r="3.6" fill="none" stroke="#ffffff" stroke-width="1.4"/>
<rect x="931.8" y="1152.7" width="27.6" height="94.3" fill="#2a69d9" stroke="none" stroke-width="1" rx="0" />
<rect x="931.8" y="1243.0" width="27.6" height="4.0" fill="#76a044" stroke="none" stroke-width="1" rx="0" />
<circle cx="945.6" cy="1197.8" r="3.6" fill="none" stroke="#ffffff" stroke-width="1.4"/>
<rect x="973.8" y="1238.6" width="27.6" height="8.4" fill="#2a69d9" stroke="none" stroke-width="1" rx="0" />
<rect x="973.8" y="1246.0" width="27.6" height="1.0" fill="#76a044" stroke="none" stroke-width="1" rx="0" />
<rect x="1015.9" y="1221.5" width="27.6" height="25.5" fill="#2a69d9" stroke="none" stroke-width="1" rx="0" />
<rect x="1015.9" y="1245.9" width="27.6" height="1.1" fill="#76a044" stroke="none" stroke-width="1" rx="0" />
<circle cx="1029.7" cy="1233.3" r="3.6" fill="none" stroke="#ffffff" stroke-width="1.4"/>
<rect x="1057.9" y="1148.9" width="27.6" height="98.1" fill="#2a69d9" stroke="none" stroke-width="1" rx="0" />
<rect x="1057.9" y="1242.9" width="27.6" height="4.1" fill="#76a044" stroke="none" stroke-width="1" rx="0" />
<circle cx="1071.7" cy="1195.2" r="3.6" fill="none" stroke="#ffffff" stroke-width="1.4"/>
<rect x="1100.0" y="1095.6" width="27.6" height="151.4" fill="#2a69d9" stroke="none" stroke-width="1" rx="0" />
<rect x="1100.0" y="1242.8" width="27.6" height="4.2" fill="#76a044" stroke="none" stroke-width="1" rx="0" />
<circle cx="1113.8" cy="1168.6" r="3.6" fill="none" stroke="#ffffff" stroke-width="1.4"/>
<rect x="1142.0" y="1157.6" width="27.6" height="89.4" fill="#2a69d9" stroke="none" stroke-width="1" rx="0" />
<rect x="1142.0" y="1243.2" width="27.6" height="3.8" fill="#76a044" stroke="none" stroke-width="1" rx="0" />
<circle cx="1155.8" cy="1200.3" r="3.6" fill="none" stroke="#ffffff" stroke-width="1.4"/>
<rect x="1184.0" y="1170" width="27.6" height="77" fill="#2a69d9" stroke="none" stroke-width="1" rx="0" />
<rect x="1184.0" y="1243.8" width="27.6" height="3.2" fill="#76a044" stroke="none" stroke-width="1" rx="0" />
<circle cx="1197.8" cy="1207.2" r="3.6" fill="none" stroke="#ffffff" stroke-width="1.4"/>
<rect x="1226.1" y="1126" width="27.6" height="121" fill="#2a69d9" stroke="none" stroke-width="1" rx="0" />
<rect x="1226.1" y="1242.8" width="27.6" height="4.2" fill="#76a044" stroke="none" stroke-width="1" rx="0" />
<circle cx="1239.9" cy="1183.8" r="3.6" fill="none" stroke="#ffffff" stroke-width="1.4"/>
<rect x="1268.1" y="1136" width="27.6" height="111" fill="#2a69d9" stroke="none" stroke-width="1" rx="0" />
<rect x="1268.1" y="1242.8" width="27.6" height="4.2" fill="#76a044" stroke="none" stroke-width="1" rx="0" />
<circle cx="1281.9" cy="1188.8" r="3.6" fill="none" stroke="#ffffff" stroke-width="1.4"/>
<rect x="1310.2" y="1180" width="27.6" height="67" fill="#2a69d9" stroke="none" stroke-width="1" rx="0" />
<rect x="1310.2" y="1244.2" width="27.6" height="2.8" fill="#76a044" stroke="none" stroke-width="1" rx="0" />
<circle cx="1324.0" cy="1211.3" r="3.6" fill="none" stroke="#ffffff" stroke-width="1.4"/>
<rect x="1352.2" y="1155.3" width="27.6" height="91.7" fill="#2a69d9" stroke="none" stroke-width="1" rx="0" />
<rect x="1352.2" y="1243.1" width="27.6" height="3.9" fill="#76a044" stroke="none" stroke-width="1" rx="0" />
<circle cx="1366.0" cy="1198.9" r="3.6" fill="none" stroke="#ffffff" stroke-width="1.4"/>
<rect x="1394.2" y="1139.7" width="27.6" height="107.3" fill="#2a69d9" stroke="none" stroke-width="1" rx="0" />
<rect x="1394.2" y="1242.8" width="27.6" height="4.2" fill="#76a044" stroke="none" stroke-width="1" rx="0" />
<circle cx="1408.0" cy="1190.6" r="3.6" fill="none" stroke="#ffffff" stroke-width="1.4"/>
<rect x="1436.3" y="1171" width="27.6" height="76" fill="#2a69d9" stroke="none" stroke-width="1" rx="0" />
<rect x="1436.3" y="1243.8" width="27.6" height="3.2" fill="#76a044" stroke="none" stroke-width="1" rx="0" />
<circle cx="1450.1" cy="1206.7" r="3.6" fill="none" stroke="#ffffff" stroke-width="1.4"/>
<rect x="1478.3" y="1164" width="27.6" height="83" fill="#2a69d9" stroke="none" stroke-width="1" rx="0" />
<rect x="1478.3" y="1243.5" width="27.6" height="3.5" fill="#76a044" stroke="none" stroke-width="1" rx="0" />
<circle cx="1492.1" cy="1203" r="3.6" fill="none" stroke="#ffffff" stroke-width="1.4"/>
<rect x="1520.4" y="1162.2" width="27.6" height="84.8" fill="#2a69d9" stroke="none" stroke-width="1" rx="0" />
<rect x="1520.4" y="1243.4" width="27.6" height="3.6" fill="#76a044" stroke="none" stroke-width="1" rx="0" />
<circle cx="1534.2" cy="1202.6" r="3.6" fill="none" stroke="#ffffff" stroke-width="1.4"/>
<rect x="1562.4" y="1156.2" width="27.6" height="90.8" fill="#2a69d9" stroke="none" stroke-width="1" rx="0" />
<rect x="1562.4" y="1243.2" width="27.6" height="3.8" fill="#76a044" stroke="none" stroke-width="1" rx="0" />
<circle cx="1576.2" cy="1199.8" r="3.6" fill="none" stroke="#ffffff" stroke-width="1.4"/>
<rect x="1604.4" y="1131.4" width="27.6" height="115.6" fill="#2a69d9" stroke="none" stroke-width="1" rx="0" />
<rect x="1604.4" y="1242.8" width="27.6" height="4.2" fill="#76a044" stroke="none" stroke-width="1" rx="0" />
<circle cx="1618.2" cy="1186.5" r="3.6" fill="none" stroke="#ffffff" stroke-width="1.4"/>
<rect x="1646.5" y="1157.6" width="27.6" height="89.4" fill="#2a69d9" stroke="none" stroke-width="1" rx="0" />
<rect x="1646.5" y="1243.2" width="27.6" height="3.8" fill="#76a044" stroke="none" stroke-width="1" rx="0" />
<circle cx="1660.3" cy="1200.3" r="3.6" fill="none" stroke="#ffffff" stroke-width="1.4"/>
<rect x="1688.5" y="1139.7" width="27.6" height="107.3" fill="#2a69d9" stroke="none" stroke-width="1" rx="0" />
<rect x="1688.5" y="1242.8" width="27.6" height="4.2" fill="#76a044" stroke="none" stroke-width="1" rx="0" />
<circle cx="1702.3" cy="1190.6" r="3.6" fill="none" stroke="#ffffff" stroke-width="1.4"/>
<rect x="1730.6" y="1185.6" width="27.6" height="61.4" fill="#2a69d9" stroke="none" stroke-width="1" rx="0" />
<rect x="1730.6" y="1244.4" width="27.6" height="2.6" fill="#76a044" stroke="none" stroke-width="1" rx="0" />
<circle cx="1744.4" cy="1215" r="3.6" fill="none" stroke="#ffffff" stroke-width="1.4"/>
<rect x="1772.6" y="1108" width="24.6" height="139" fill="#2a69d9" stroke="none" stroke-width="1" rx="0" />
<rect x="1772.6" y="1242.8" width="24.6" height="4.2" fill="#76a044" stroke="none" stroke-width="1" rx="0" />
<circle cx="1786.4" cy="1175.5" r="3.6" fill="none" stroke="#ffffff" stroke-width="1.4"/>
<line x1="283.8" y1="1247.3" x2="1797" y2="1247.3" stroke="#757a80" stroke-width="1.3" />
<line x1="378.2" y1="1247.3" x2="378.2" y2="1253" stroke="#8a8f94" stroke-width="1.2" />
<text x="378.2" y="1265" font-size="11" fill="#5f6368" text-anchor="middle" font-weight="400" letter-spacing="-0.2">9:50 AM</text>
<line x1="462.26" y1="1247.3" x2="462.26" y2="1253" stroke="#8a8f94" stroke-width="1.2" />
<text x="462.3" y="1265" font-size="11" fill="#5f6368" text-anchor="middle" font-weight="400" letter-spacing="-0.2">10:00 AM</text>
<line x1="546.3199999999999" y1="1247.3" x2="546.3199999999999" y2="1253" stroke="#8a8f94" stroke-width="1.2" />
<text x="546.3" y="1265" font-size="11" fill="#5f6368" text-anchor="middle" font-weight="400" letter-spacing="-0.2">10:10 AM</text>
<line x1="630.38" y1="1247.3" x2="630.38" y2="1253" stroke="#8a8f94" stroke-width="1.2" />
<text x="630.4" y="1265" font-size="11" fill="#5f6368" text-anchor="middle" font-weight="400" letter-spacing="-0.2">10:20 AM</text>
<line x1="714.44" y1="1247.3" x2="714.44" y2="1253" stroke="#8a8f94" stroke-width="1.2" />
<text x="714.4" y="1265" font-size="11" fill="#5f6368" text-anchor="middle" font-weight="400" letter-spacing="-0.2">10:30 AM</text>
<line x1="798.5" y1="1247.3" x2="798.5" y2="1253" stroke="#8a8f94" stroke-width="1.2" />
<text x="798.5" y="1265" font-size="11" fill="#5f6368" text-anchor="middle" font-weight="400" letter-spacing="-0.2">10:40 AM</text>
<line x1="882.56" y1="1247.3" x2="882.56" y2="1253" stroke="#8a8f94" stroke-width="1.2" />
<text x="882.6" y="1265" font-size="11" fill="#5f6368" text-anchor="middle" font-weight="400" letter-spacing="-0.2">10:50 AM</text>
<line x1="966.6200000000001" y1="1247.3" x2="966.6200000000001" y2="1253" stroke="#8a8f94" stroke-width="1.2" />
<text x="966.6" y="1265" font-size="11" fill="#5f6368" text-anchor="middle" font-weight="400" letter-spacing="-0.2">11:00 AM</text>
<line x1="1050.68" y1="1247.3" x2="1050.68" y2="1253" stroke="#8a8f94" stroke-width="1.2" />
<text x="1050.7" y="1265" font-size="11" fill="#5f6368" text-anchor="middle" font-weight="400" letter-spacing="-0.2">11:10 AM</text>
<line x1="1134.74" y1="1247.3" x2="1134.74" y2="1253" stroke="#8a8f94" stroke-width="1.2" />
<text x="1134.7" y="1265" font-size="11" fill="#5f6368" text-anchor="middle" font-weight="400" letter-spacing="-0.2">11:20 AM</text>
<line x1="1218.8" y1="1247.3" x2="1218.8" y2="1253" stroke="#8a8f94" stroke-width="1.2" />
<text x="1218.8" y="1265" font-size="11" fill="#5f6368" text-anchor="middle" font-weight="400" letter-spacing="-0.2">11:30 AM</text>
<line x1="1302.8600000000001" y1="1247.3" x2="1302.8600000000001" y2="1253" stroke="#8a8f94" stroke-width="1.2" />
<text x="1302.9" y="1265" font-size="11" fill="#5f6368" text-anchor="middle" font-weight="400" letter-spacing="-0.2">11:40 AM</text>
<line x1="1386.92" y1="1247.3" x2="1386.92" y2="1253" stroke="#8a8f94" stroke-width="1.2" />
<text x="1386.9" y="1265" font-size="11" fill="#5f6368" text-anchor="middle" font-weight="400" letter-spacing="-0.2">11:50 AM</text>
<line x1="1470.98" y1="1247.3" x2="1470.98" y2="1253" stroke="#8a8f94" stroke-width="1.2" />
<text x="1471.0" y="1265" font-size="11" fill="#5f6368" text-anchor="middle" font-weight="400" letter-spacing="-0.2">12:00 PM</text>
<line x1="1555.0400000000002" y1="1247.3" x2="1555.0400000000002" y2="1253" stroke="#8a8f94" stroke-width="1.2" />
<text x="1555.0" y="1265" font-size="11" fill="#5f6368" text-anchor="middle" font-weight="400" letter-spacing="-0.2">12:10 PM</text>
<line x1="1639.1000000000001" y1="1247.3" x2="1639.1000000000001" y2="1253" stroke="#8a8f94" stroke-width="1.2" />
<text x="1639.1" y="1265" font-size="11" fill="#5f6368" text-anchor="middle" font-weight="400" letter-spacing="-0.2">12:20 PM</text>
<line x1="1723.16" y1="1247.3" x2="1723.16" y2="1253" stroke="#8a8f94" stroke-width="1.2" />
<text x="1723.2" y="1265" font-size="11" fill="#5f6368" text-anchor="middle" font-weight="400" letter-spacing="-0.2">12:30 PM</text>
<text x="283.8" y="1265" font-size="11" fill="#5f6368" text-anchor="start" font-weight="400" >UTC-5</text>
<circle cx="290.7" cy="1289.2" r="4.2" fill="#2a69d9"/>
<text x="301.2" y="1293" font-size="13.4" fill="#5f6368" text-anchor="start" font-weight="400" >input_tokens</text>
<rect x="389.6" y="1284.8" width="8.8" height="8.8" fill="#76a044" stroke="none" stroke-width="1" rx="0" />
<text x="403.5" y="1293" font-size="13.4" fill="#5f6368" text-anchor="start" font-weight="400" >output_tokens</text>
</svg>
<div class="fade"></div>
</body></html>
